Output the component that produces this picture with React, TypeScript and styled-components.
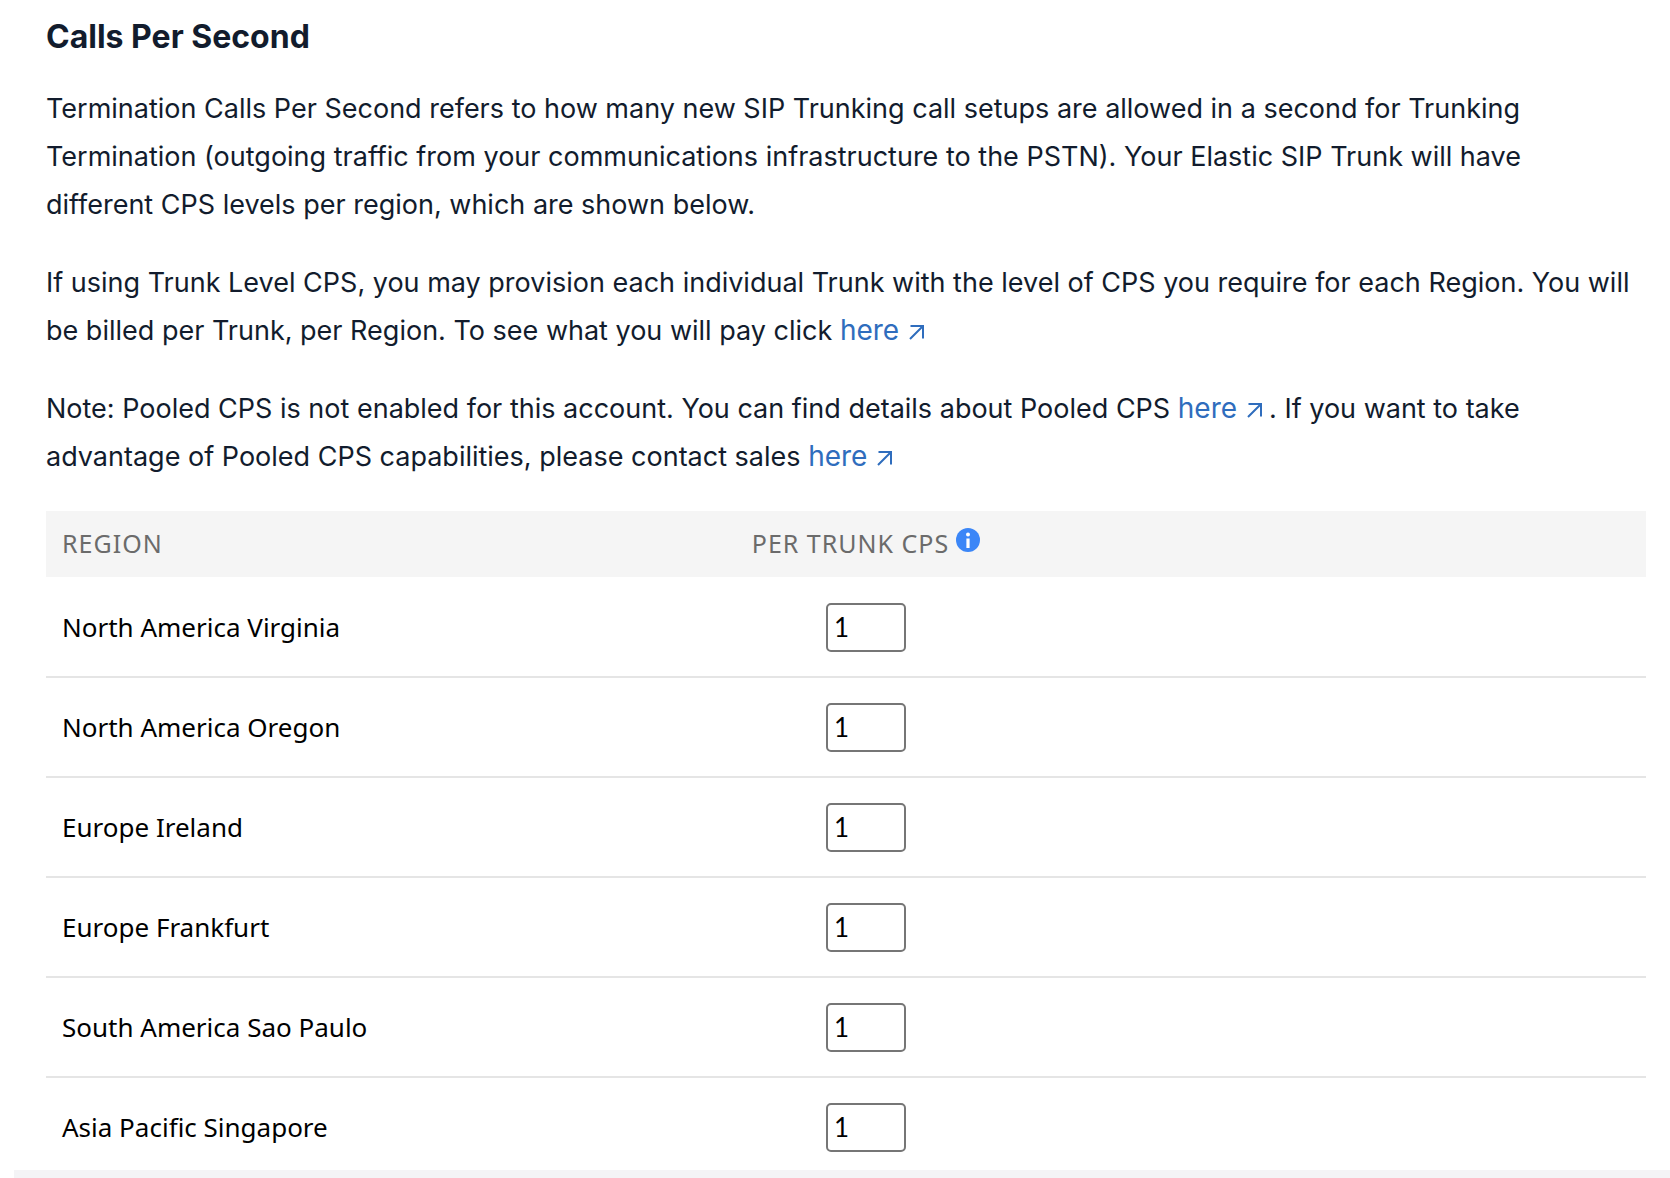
import React from "react";
import styled, { createGlobalStyle } from "styled-components";

const GlobalStyle = createGlobalStyle`
  *, *::before, *::after { box-sizing: border-box; }
  body {
    margin: 0;
    background: #fff;
    color: #121c2d;
    font-family: Inter, "Liberation Sans", sans-serif;
  }
`;

const Page = styled.main`
  padding: 17px 24px 0 46px;
`;

const Heading = styled.h2`
  margin: 0 0 28px;
  font-size: 32px;
  line-height: 40px;
  font-weight: 700;
`;

const Paragraph = styled.p`
  margin: 0 0 30px;
  padding-right: 13px;
  font-size: 27px;
  line-height: 48px;
`;

const Link = styled.a`
  color: #2f6dbd;
  font-size: 28px;
  line-height: 40px;
  text-decoration: none;
  white-space: nowrap;

  svg {
    margin: 0 7px 0 10px;
  }
`;

const CpsTable = styled.table`
  width: 100%;
  table-layout: fixed;
  border-collapse: separate;
  border-spacing: 0;
  font-family: "Noto Sans", sans-serif;
`;

const RegionCol = styled.col`
  width: 36%;
`;

const CpsCol = styled.col`
  width: 30.5%;
`;

const HeaderCell = styled.th<{ $center?: boolean }>`
  height: 67px;
  padding: 0 16px 2px;
  border-bottom: 1px solid #fff;
  background: #f5f5f5;
  color: #6b6b6b;
  font-size: 25px;
  line-height: 32px;
  font-weight: 400;
  letter-spacing: 1px;
  text-align: ${(p) => (p.$center ? "center" : "left")};
  text-transform: uppercase;
`;

const HeaderLabel = styled.span`
  display: inline-flex;
  align-items: center;
  gap: 7px;
`;

const InfoButton = styled.button`
  display: flex;
  padding: 0 0 6px;
  border: 0;
  background: none;
  cursor: pointer;
`;

const Cell = styled.td<{ $center?: boolean }>`
  height: 100px;
  padding: 0 16px;
  border-bottom: 2px solid #e5e5e5;
  color: #000;
  font-size: 26px;
  line-height: 36px;
  text-align: ${(p) => (p.$center ? "center" : "left")};

  tr:last-child > & {
    height: 92px;
    padding-top: 6px;
    border-bottom: 0;
  }
`;

const CpsInput = styled.input`
  display: block;
  width: 80px;
  height: 49px;
  margin: 0 auto;
  padding: 0 6px;
  border: 2px solid #767676;
  border-radius: 5px;
  background: #fff;
  color: #000;
  font-family: Lato, "Noto Sans", sans-serif;
  font-size: 26px;
`;

const Footer = styled.footer`
  height: 8px;
  margin-left: 14px;
  background: #f4f4f6;
`;

const ArrowIcon = () => (
  <svg width="15" height="15" viewBox="0 0 15 15" fill="none" stroke="currentColor" strokeWidth="2" aria-hidden="true">
    <path d="M1.5 1H14V13.5M14 1L1 14" />
  </svg>
);

const InfoIcon = () => (
  <svg width="24" height="24" viewBox="0 0 24 24" aria-hidden="true">
    <circle cx="12" cy="12" r="12" fill="#3b86f7" />
    <circle cx="12" cy="6.5" r="2" fill="#fff" />
    <rect x="10.4" y="10.5" width="3.2" height="9.5" fill="#fff" />
  </svg>
);

const HereLink = () => (
  <Link href="#">
    here
    <ArrowIcon />
  </Link>
);

const regions = [
  "North America Virginia",
  "North America Oregon",
  "Europe Ireland",
  "Europe Frankfurt",
  "South America Sao Paulo",
  "Asia Pacific Singapore",
];

const RegionRow = ({ name }: { name: string }) => {
  const id = name.toLowerCase().replace(/ /g, "-");
  return (
    <tr>
      <Cell>
        <label htmlFor={id}>{name}</label>
      </Cell>
      <Cell $center>
        <CpsInput id={id} type="text" inputMode="numeric" defaultValue="1" />
      </Cell>
      <Cell />
    </tr>
  );
};

export default function App() {
  return (
    <>
      <GlobalStyle />
      <Page>
        <Heading>Calls Per Second</Heading>
        <Paragraph>
          Termination Calls Per Second refers to how many new SIP Trunking call setups are allowed in a second for
          Trunking Termination (outgoing traffic from your communications infrastructure to the PSTN). Your Elastic SIP
          Trunk will have different CPS levels per region, which are shown below.
        </Paragraph>
        <Paragraph>
          If using Trunk Level CPS, you may provision each individual Trunk with the level of CPS you require for each
          Region. You will be billed per Trunk, per Region. To see what you will pay click <HereLink />
        </Paragraph>
        <Paragraph>
          Note: Pooled CPS is not enabled for this account. You can find details about Pooled CPS <HereLink />. If you
          want to take advantage of Pooled CPS capabilities, please contact sales <HereLink />
        </Paragraph>
        <CpsTable>
          <colgroup>
            <RegionCol />
            <CpsCol />
            <col />
          </colgroup>
          <thead>
            <tr>
              <HeaderCell scope="col">Region</HeaderCell>
              <HeaderCell scope="col" $center>
                <HeaderLabel>
                  Per Trunk CPS
                  <InfoButton type="button" aria-label="About per trunk CPS">
                    <InfoIcon />
                  </InfoButton>
                </HeaderLabel>
              </HeaderCell>
              <HeaderCell as="td" />
            </tr>
          </thead>
          <tbody>
            {regions.map((name) => (
              <RegionRow key={name} name={name} />
            ))}
          </tbody>
        </CpsTable>
      </Page>
      <Footer />
    </>
  );
}
